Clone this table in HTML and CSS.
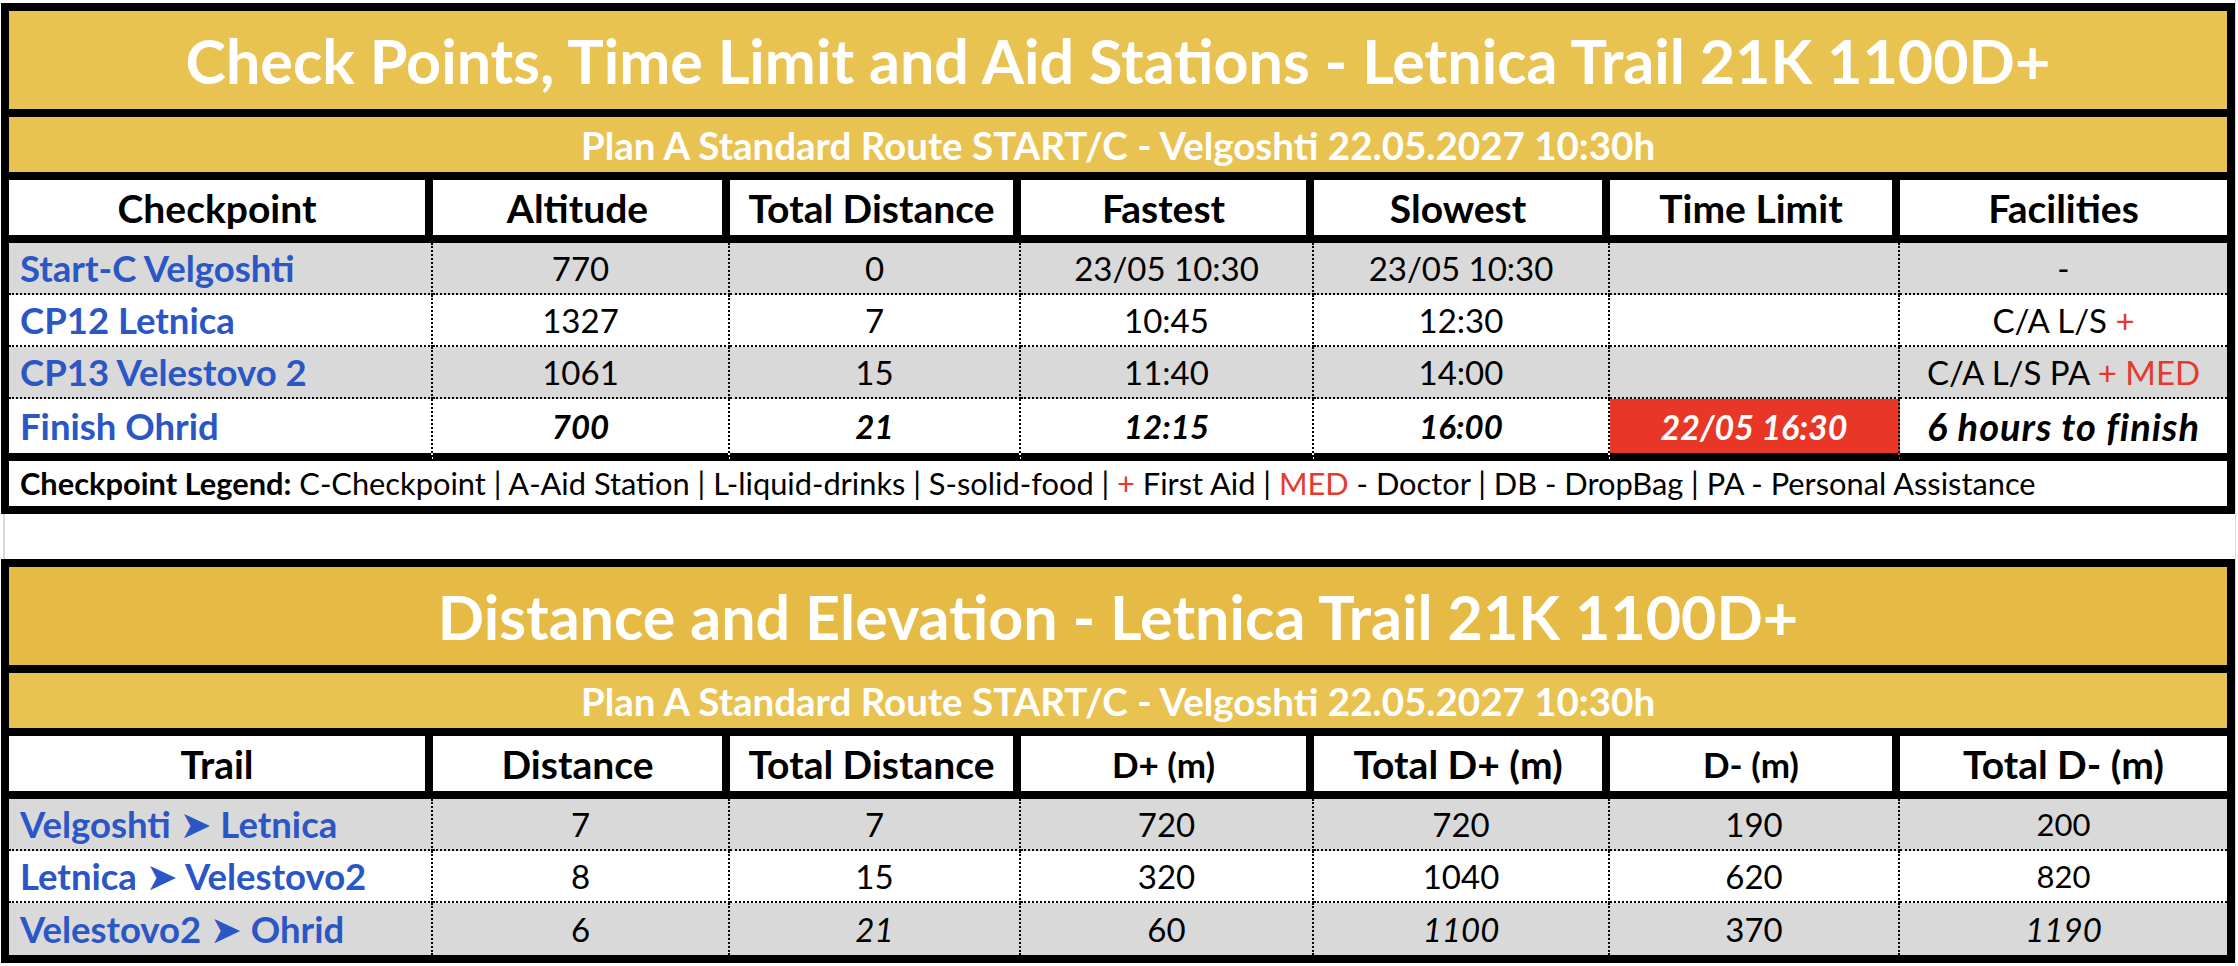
FILE: index.html
```html
<!DOCTYPE html>
<html lang="en">
<head>
<meta charset="utf-8">
<title>Letnica Trail 21K 1100D+</title>
<link rel="stylesheet" href="styles.css">
</head>
<body>
<div class="page">
  <section class="sheet t1">
    <div class="title">Check Points, Time Limit and Aid Stations - Letnica Trail 21K 1100D+</div>
    <div class="subtitle">Plan A Standard Route START/C - Velgoshti 22.05.2027 10:30h</div>
    <div class="row head">
      <div class="cell">Checkpoint</div>
      <div class="cell">Altitude</div>
      <div class="cell">Total Distance</div>
      <div class="cell">Fastest</div>
      <div class="cell">Slowest</div>
      <div class="cell">Time Limit</div>
      <div class="cell">Facilities</div>
    </div>
    <div class="row data gray">
      <div class="cell name">Start-C Velgoshti</div>
      <div class="cell">770</div>
      <div class="cell">0</div>
      <div class="cell">23/05 10:30</div>
      <div class="cell">23/05 10:30</div>
      <div class="cell"></div>
      <div class="cell">-</div>
    </div>
    <div class="row data">
      <div class="cell name">CP12 Letnica</div>
      <div class="cell">1327</div>
      <div class="cell">7</div>
      <div class="cell">10:45</div>
      <div class="cell">12:30</div>
      <div class="cell"></div>
      <div class="cell"><span>C/A L/S <span class="red">+</span></span></div>
    </div>
    <div class="row data gray">
      <div class="cell name">CP13 Velestovo 2</div>
      <div class="cell">1061</div>
      <div class="cell">15</div>
      <div class="cell">11:40</div>
      <div class="cell">14:00</div>
      <div class="cell"></div>
      <div class="cell"><span>C/A L/S PA <span class="red">+ MED</span></span></div>
    </div>
    <div class="row data last strong">
      <div class="cell name">Finish Ohrid</div>
      <div class="cell">700</div>
      <div class="cell">21</div>
      <div class="cell">12:15</div>
      <div class="cell">16:00</div>
      <div class="cell limit">22/05 16:30</div>
      <div class="cell note">6 hours to finish</div>
    </div>
    <div class="legend"><span><b>Checkpoint Legend:</b> C-Checkpoint | A-Aid Station | L-liquid-drinks | S-solid-food | <span class="red">+</span> First Aid | <span class="red">MED</span> - Doctor | DB - DropBag | PA - Personal Assistance</span></div>
  </section>

  <div class="gap"></div>

  <section class="sheet t2">
    <div class="title dark">Distance and Elevation - Letnica Trail 21K 1100D+</div>
    <div class="subtitle">Plan A Standard Route START/C - Velgoshti 22.05.2027 10:30h</div>
    <div class="row head">
      <div class="cell">Trail</div>
      <div class="cell">Distance</div>
      <div class="cell">Total Distance</div>
      <div class="cell small">D+ (m)</div>
      <div class="cell">Total D+ (m)</div>
      <div class="cell small">D- (m)</div>
      <div class="cell">Total D- (m)</div>
    </div>
    <div class="row data gray">
      <div class="cell name"><span>Velgoshti <span class="arrow">➤</span> Letnica</span></div>
      <div class="cell">7</div>
      <div class="cell">7</div>
      <div class="cell">720</div>
      <div class="cell">720</div>
      <div class="cell">190</div>
      <div class="cell minor">200</div>
    </div>
    <div class="row data">
      <div class="cell name"><span>Letnica <span class="arrow">➤</span> Velestovo2</span></div>
      <div class="cell">8</div>
      <div class="cell">15</div>
      <div class="cell">320</div>
      <div class="cell">1040</div>
      <div class="cell">620</div>
      <div class="cell minor">820</div>
    </div>
    <div class="row data gray end">
      <div class="cell name"><span>Velestovo2 <span class="arrow">➤</span> Ohrid</span></div>
      <div class="cell">6</div>
      <div class="cell it">21</div>
      <div class="cell">60</div>
      <div class="cell it">1100</div>
      <div class="cell">370</div>
      <div class="cell it">1190</div>
    </div>
  </section>
</div>
</body>
</html>
```
FILE: styles.css
```css
html, body {
  margin: 0;
  padding: 0;
  background: #ffffff;
}

body {
  font-family: Lato, "Liberation Sans", sans-serif;
  color: #000000;
}

.page {
  width: 2236px;
  min-height: 966px;
  border-right: 1px solid #dcdcdc;
  padding-top: 3px;
  box-sizing: border-box;
}

.sheet {
  width: 2234px;
  margin-left: 1px;
  border: 8px solid #000000;
  box-sizing: border-box;
}

.title {
  height: 106px;
  border-bottom: 8px solid #000000;
  box-sizing: border-box;
  background: #e9c352;
  color: #ffffff;
  font-weight: 700;
  font-size: 61px;
  display: flex;
  align-items: center;
  justify-content: center;
  white-space: nowrap;
}

.title.dark {
  background: #e6bb45;
}

.subtitle {
  height: 63px;
  border-bottom: 8px solid #000000;
  box-sizing: border-box;
  background: #e9c352;
  color: #ffffff;
  font-weight: 700;
  font-size: 38.5px;
  display: flex;
  align-items: center;
  justify-content: center;
  white-space: nowrap;
}

.row {
  display: grid;
  grid-template-columns: 424px 297px 291px 293px 296px 290px 327px;
}

.cell {
  box-sizing: border-box;
  display: flex;
  align-items: center;
  justify-content: center;
  white-space: pre;
  overflow: hidden;
}

.head .cell {
  height: 63px;
  border-right: 8px solid #000000;
  border-bottom: 8px solid #000000;
  font-weight: 700;
  font-size: 39px;
  background: #ffffff;
}

.head .cell.small {
  font-size: 35px;
}

.row .cell:last-child {
  border-right: none;
}

.data .cell {
  height: 52px;
  border-right: 2px dotted #000000;
  border-bottom: 2px dotted #000000;
  font-size: 33px;
  background: #ffffff;
}

.data.gray .cell {
  background: #d9d9d9;
}

.data .cell.name {
  justify-content: flex-start;
  padding-left: 11px;
  color: #2a56c6;
  font-weight: 700;
  font-size: 36.5px;
}

.data.last .cell {
  height: 62px;
  border-bottom: 8px solid #000000;
}

.data.end .cell {
  height: 52px;
  border-bottom: none;
}

.data.strong .cell {
  font-weight: 700;
  font-style: italic;
}

.data.strong .cell.name {
  font-style: normal;
}

.data .cell.limit {
  background: #e83627;
  color: #ffffff;
  font-size: 34px;
}

.data .cell.note {
  font-size: 38px;
  letter-spacing: 1px;
}

.data .cell.it {
  font-style: italic;
}

.data .cell.minor {
  font-size: 31px;
}

.arrow {
  font-family: "DejaVu Sans", sans-serif;
  font-size: 38px;
  line-height: 1;
  letter-spacing: 0;
}

.red {
  color: #e53a2e;
}

.legend {
  height: 45px;
  display: flex;
  align-items: center;
  padding-left: 11px;
  font-size: 30.8px;
  white-space: nowrap;
  background: #ffffff;
}

.legend b {
  font-weight: 700;
}

.gap {
  height: 45px;
  width: 0;
  margin-left: 3px;
  border-left: 2px solid #dadada;
}
```
